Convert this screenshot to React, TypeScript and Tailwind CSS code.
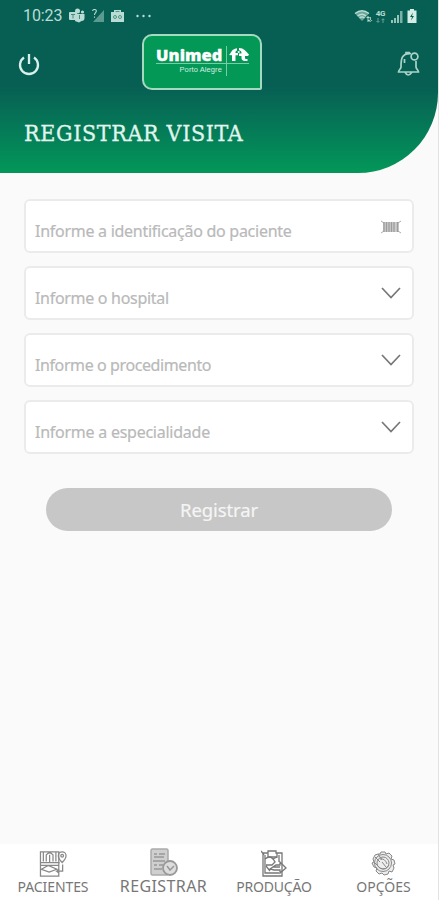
import React from 'react';

const campos = [
  { label: 'Informe a identificação do paciente', tracking: 'tracking-[-0.27px]', barcode: true },
  { label: 'Informe o hospital', tracking: 'tracking-[-0.3px]' },
  { label: 'Informe o procedimento', tracking: 'tracking-[-0.4px]' },
  { label: 'Informe a especialidade', tracking: 'tracking-[-0.25px]' },
];

function StatusBar() {
  return (
    <div className="flex h-8 items-center justify-between pl-[23px] pr-[21px] text-[#b9dcd4]">
      <div className="flex items-center">
        <span className="w-[39px] whitespace-nowrap font-['Roboto',sans-serif] text-[16px] leading-5 tracking-[-0.1px]">10:23</span>
        <svg className="ml-[7px]" width="16" height="16" viewBox="0 0 16 16" fill="currentColor">
          <circle cx="8.5" cy="3" r="2.5" />
          <circle cx="13.5" cy="4" r="1.6" />
          <path d="M6 6h9.5v4a3 3 0 0 1-3 3L10 14.500 6 13z" />
          <rect x="0" y="4" width="8" height="8" rx="1" />
          <path d="M2 6.500h4M4 6.500v4M10.500 7v4" stroke="#4a8b80" strokeWidth="1" />
        </svg>
        <svg className="ml-[7px]" width="12" height="14" viewBox="0 0 12 14">
          <path d="M12 1v12H1z" fill="#5b9b8f" />
          <path d="M.6 2C.6 0 4.500 0 4.300 2 4.200 4 2.500 4 2.500 6M2.500 7.500v1.200" fill="none" stroke="currentColor" strokeWidth="1.100" />
        </svg>
        <svg className="ml-[7px]" width="13" height="13" viewBox="0 0 13 13" fill="currentColor">
          <path d="M3 0h7v2h3v10H0V2h3z" />
          <path d="M4.500 1.500h4M2.500 7a1.500 1.500 0 1 0 3 0 1.500 1.500 0 1 0-3 0M7.500 7a1.500 1.500 0 1 0 3 0 1.500 1.500 0 1 0-3 0" fill="none" stroke="#4a8b80" strokeWidth=".9" />
        </svg>
        <svg className="ml-3" width="15" height="4" viewBox="0 0 15 4" fill="currentColor">
          <circle cx="1.500" cy="2" r="1.200" /><circle cx="7.500" cy="2" r="1.200" /><circle cx="13.500" cy="2" r="1.200" />
        </svg>
      </div>
      <div className="flex items-center">
        <svg width="19" height="14" viewBox="0 0 19 14">
          <path d="M1 4.500Q8 -1 15 4.500L8 12z" fill="#6aa69a" />
          <path d="M1 4.500Q8-1 15 4.500M3.500 7Q8 3.500 12 7M5.500 9Q8 7 10.500 9" fill="none" stroke="currentColor" strokeWidth="1.400" />
          <path d="m12 9 2-2 2 2zM14 11l2 2 2.500-2zM13.500 9h1v4h-1zM15.800 8h1v4h-1z" fill="currentColor" />
        </svg>
        <div className="ml-[2px] flex w-[11px] flex-col items-center">
          <span className="font-['Roboto',sans-serif] text-[8px] font-bold leading-[8px] tracking-[-0.3px]">4G</span>
          <svg width="9" height="5" viewBox="0 0 9 5" fill="none" stroke="#7fb3a8"><path d="M2 0v4M.5 3 2 4.500 3.500 3M7 5V1M5.500 2.200 7 .7l1.500 1.500" strokeWidth=".8" /></svg>
        </div>
        <svg className="ml-1" width="13" height="13" viewBox="0 0 13 13" fill="currentColor">
          <path d="M1 10h2v3H1zM4 8h2v5H4zM7 5h2v8H7z" opacity=".8" /><path d="M10 1h2.500v12H10z" opacity=".65" />
        </svg>
        <svg className="ml-[4px]" width="10" height="14" viewBox="0 0 10 14">
          <path d="M3 0h4v1.500h2.500V14H.500V1.500H3z" fill="#d5ece7" /><path d="M6 3.500 3 8h2l-1 3.500L7 7H5z" fill="#075f53" />
        </svg>
      </div>
    </div>
  );
}

function Logo() {
  return (
    <div className="mt-[2px] h-[56px] w-[120px] rounded-[10px] rounded-br-[2px] border-2 border-[#a6dac0] bg-[#049857] pl-[12px] pt-[11px] text-white">
      <div className="flex h-[17px] w-[93px] items-end border-b border-[#7bcba6]">
        <span className="w-[68px] whitespace-nowrap font-['Open_Sans',sans-serif] text-[16.5px] font-extrabold leading-[17px] tracking-[0.05px] [-webkit-text-stroke:0.3px_white]">Unimed</span>
        <svg className="ml-[5px] mb-[2px]" width="20" height="13" viewBox="0 0 20 13" fill="currentColor">
          <path d="M0 7C2 5.500 2 1 8 .2V2.500C6.500 3 6.500 4 6.500 5H9v2.300H6.500V13H3V7.300z" />
          <path d="M10 0c5 0 6.500 3 10 6.500L19 8h-3v2c0 1 .8 1.300 2.500 1v2c-4 .3-6-.5-6-3V8H10V5.500h2.500C12.500 3.500 12 2.700 10 2.300z" />
          <circle cx="9.700" cy="4" r="1.100" />
        </svg>
      </div>
      <div className="relative flex h-[11px] w-[66px] justify-end pt-px">
        <span className="whitespace-nowrap font-['Liberation_Sans',sans-serif] text-[7.5px] leading-[9px] tracking-[0.1px] text-[#d3eee0]">Porto Alegre</span>
        <div className="absolute -top-[18px] left-[70px] h-[30px] w-px bg-[#7bcba6]" />
      </div>
    </div>
  );
}

function Barcode() {
  return (
    <svg width="20" height="14" viewBox="0 0 20 14" fill="none" stroke="#888">
      <path d="m0 1 3 2M20 1l-3 2M0 13l3-2M20 13l-3-2" stroke="#aaa" />
      <path d="M3 2v10M5.500 2v10M8 2v10M10.500 2v10M13 2v10M16.500 2v10" strokeWidth="1.300" />
      <path d="M2 2h16v10H2z" fill="#aaa" fillOpacity=".6" stroke="none" />
    </svg>
  );
}

function PacientesIcon() {
  return (
    <svg width="28" height="27" viewBox="0 0 28 28" fill="none" stroke="#888" strokeWidth="1.300">
      <path d="M1 2h19v25H1zM1 13h20M1 16h19M4 2v10M17 2v10M7 12V5q3.500-4 7 0v7M10.500 5v8M2 20l7-4 9 4-8 3z" />
      <path d="M23.500 13s-4-4-4-7a4 4 0 0 1 8 0c0 3-4 7-4 7zM24 15v7h-6l2-2M18 22l2 2" />
      <circle cx="23.500" cy="6" r="1.400" />
    </svg>
  );
}

function RegistrarIcon() {
  return (
    <svg width="28" height="28" viewBox="0 0 28 28" fill="none" stroke="#aaa" strokeWidth="1.500">
      <rect x="1" y="1" width="17" height="26" rx="1.500" fill="#cfcfcf" />
      <path d="M4 6h3M9 6h6M4 9h10M3 13h12M4 17h3M9 17h4M4 21h8" stroke="#999" />
      <circle cx="20" cy="20" r="7" fill="#ddd" stroke="#999" strokeWidth="1.800" />
      <path d="m17 18 3 4 4-4" stroke="#999" />
    </svg>
  );
}

function ProducaoIcon() {
  return (
    <svg width="27" height="27" viewBox="0 0 27 27" fill="none" stroke="#777" strokeWidth="1.300">
      <path d="M2 3h5V1h8v2h6v23H2zM4 5v18h14M18 5v7M7 3v4h9V3M0 1l3 4" />
      <path d="M4 9q5-4 8 0l2 3-3 3H5M12 9l4-2M9 19l6-4h4v-3l6 6-6 5v-3h-6zM12 17h7M5 16l4 5" />
    </svg>
  );
}

function OpcoesIcon() {
  return (
    <svg width="27" height="27" viewBox="0 0 27 27" fill="none" stroke="#888" strokeWidth="1">
      <path d="m8 4 2 0 1-2 4 0 1 2 3-1 3 3-1 3 3 1 1 4-2 1 1 3-2 4-3-1-1 3-4 1-2-2-3 1-3-3 1-3-3-1-2-4 2-1-1-3 2-4z" fill="#ededed" />
      <circle cx="13" cy="13" r="8.500" /><circle cx="13" cy="13" r="6" />
      <path d="m5 7 5 5M8 4l4 6M5 13l5 5q6 3 9-3M10 9q5-1 7 5M12 12l4 5" />
    </svg>
  );
}

const abas = [
  { nome: 'PACIENTES', icon: <PacientesIcon />, style: 'w-[106px] pt-[6px]', text: 'text-[14px] tracking-[-0.1px]' },
  { nome: 'REGISTRAR', icon: <RegistrarIcon />, style: 'w-[115px] pt-[4px]', text: 'text-[16px] tracking-[0.4px]' },
  { nome: 'PRODUÇÃO', icon: <ProducaoIcon />, style: 'w-[106px] pt-[6px]', text: 'text-[14px] tracking-[-0.2px]' },
  { nome: 'OPÇÕES', icon: <OpcoesIcon />, style: 'w-[113px] pt-[6px]', text: 'text-[14px] tracking-[0px]' },
];

export default function App() {
  return (
    <div className="flex h-[900px] w-[439px] flex-col overflow-hidden border-r border-[#e2e2e2] bg-[#fafafa] font-['Noto_Sans',sans-serif]">
      <header className="h-[173px] rounded-br-[80px] bg-linear-to-b from-[#075f53] from-50% to-[#039759]">
        <StatusBar />
        <div className="flex h-[65px] items-start pl-[18px] pr-[18px]">
          <svg className="mt-[21px]" width="22" height="23" viewBox="0 0 22 23" fill="none" stroke="#d7f0eb" strokeWidth="2.300">
            <path d="M6 4.500a9 9 0 1 0 10 0M11 1v10" />
          </svg>
          <div className="ml-[102px]"><Logo /></div>
          <svg className="ml-auto mt-[18px]" width="23" height="28" viewBox="0 0 23 28" fill="none" stroke="#a9d3c9" strokeWidth="1.700">
            <path d="M14 3.600C4 3 4 10 4 17c0 2-2.500 3-2.500 5h20c0-2-2.500-3-2.500-5v-6M9 4V2.500h3V4M8 22q3 6 7 0M7.500 9v4" />
            <circle cx="17.500" cy="6.500" r="3.400" />
          </svg>
        </div>
        <h1 className="ml-6 mt-[21px] whitespace-nowrap font-['DejaVu_Serif_Condensed','DejaVu_Serif',serif] text-[23px] leading-[30px] tracking-[0.65px] text-[#e1f5ee] [-webkit-text-stroke:0.3px_#e1f5ee]">REGISTRAR VISITA</h1>
      </header>

      <main className="flex flex-1 flex-col px-6 pt-[26px]">
        <div className="flex flex-col gap-[13px]">
          {campos.map((campo) => (
            <button key={campo.label} className="flex h-[54px] w-[390px] items-start justify-between rounded-[6px] border-2 border-[#ebebeb] bg-white pl-[9px] pr-[11px]">
              <span className={`mt-[18px] whitespace-nowrap text-[16px] leading-6 text-[#b9b9b9] [-webkit-text-stroke:0.2px_#b9b9b9] ${campo.tracking}`}>{campo.label}</span>
              <span className="mt-[19px]">
                {campo.barcode ? <Barcode /> : (
                  <svg width="20" height="13" viewBox="0 0 20 13" fill="none" stroke="#777" strokeWidth="1.700"><path d="m1 1 9 9.500L19 1" /></svg>
                )}
              </span>
            </button>
          ))}
        </div>
        <button className="ml-[22px] mt-[34px] h-[43px] w-[346px] rounded-full bg-[#c7c7c7] text-[18.5px] leading-6 tracking-[-0.1px] text-[#f5f5f5] [-webkit-text-stroke:0.2px_#f5f5f5]">Registrar</button>
      </main>

      <nav className="flex h-[56px] bg-white">
        {abas.map((aba) => (
          <div key={aba.nome} className={`flex flex-none flex-col items-center ${aba.style}`}>
            {aba.icon}
            <span className={`whitespace-nowrap leading-5 text-[#777] ${aba.text}`}>{aba.nome}</span>
          </div>
        ))}
      </nav>
    </div>
  );
}
